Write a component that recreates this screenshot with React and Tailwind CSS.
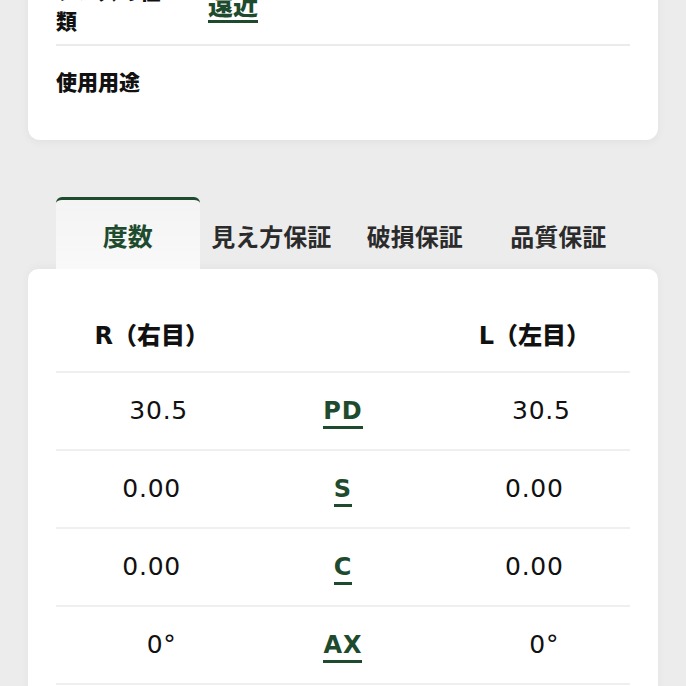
const rows = [
    { key: "PD", r: "30.5", l: "30.5", pad: "pl-[14px]" },
    { key: "S", r: "0.00", l: "0.00", pad: "" },
    { key: "C", r: "0.00", l: "0.00", pad: "" },
    { key: "AX", r: "0°", l: "0°", pad: "pl-[20px]" },
];

const tabs = ["度数", "見え方保証", "破損保証", "品質保証"];

export default function App() {
    return (
        <div className="h-[686px] overflow-hidden bg-[#ececec] font-['DejaVu_Sans','Noto_Sans_CJK_JP',sans-serif] text-[#111]">
            {/* 上部カード（レンズ情報） */}
            <div className="-mt-[40px] mx-[28px] bg-white rounded-b-[12px] px-[28px] shadow-[0_2px_10px_rgba(0,0,0,0.05)]">
                <div className="flex items-start pt-[15px] pb-[9px]">
                    <div className="w-[118px] text-[21px] leading-[30px] font-black font-['Noto_Sans_CJK_JP',sans-serif]">
                        レンズの種類
                    </div>
                    <div className="ml-[34px] mt-[16px]">
                        <span className="inline-block text-[25px] leading-[26px] font-black text-[#1e4a2e] border-b-[3px] border-[#1e4a2e] pb-[3px] font-['Noto_Sans_CJK_JP',sans-serif]">
                            遠近
                        </span>
                    </div>
                </div>
                <div className="h-[2px] bg-[#ebebeb]" />
                <div className="pt-[22px] pb-[46px] text-[21px] leading-[26px] font-black font-['Noto_Sans_CJK_JP',sans-serif]">
                    使用用途
                </div>
            </div>

            {/* タブ */}
            <div className="mt-[57px] mx-[56px] grid grid-cols-4 h-[72px]">
                {tabs.map((t, i) => (
                    <div
                        key={t}
                        className={
                            i === 0
                                ? "flex items-center justify-center pt-[2px] border-t-[3px] border-[#1e4a2e] rounded-t-[6px] bg-gradient-to-b from-[#f3f4f3] to-[#f8f9f8] text-[#1e4a2e] text-[25px] font-bold font-['Noto_Sans_CJK_JP',sans-serif]"
                                : "flex items-center justify-center pt-[2px] border-t-[3px] border-transparent text-[#2b2b2b] text-[24px] font-bold font-['Noto_Sans_CJK_JP',sans-serif]"
                        }
                    >
                        {t}
                    </div>
                ))}
            </div>

            {/* 度数テーブル */}
            <div className="mx-[28px] bg-white rounded-t-[10px] px-[28px] shadow-[0_-2px_10px_rgba(0,0,0,0.04)]">
                <div className="grid grid-cols-3 h-[102px] pt-[51px] text-[24px] leading-[32px] font-black">
                    <div className="text-center">R（右目）</div>
                    <div />
                    <div className="text-center">L（左目）</div>
                </div>
                {rows.map((row) => (
                    <div key={row.key}>
                        <div className="h-[2px] bg-[#efefef]" />
                        <div className="grid grid-cols-3 h-[76px] items-center">
                            <div className={`text-center text-[25px] leading-[30px] tracking-[0.03em] ${row.pad}`}>
                                {row.r}
                            </div>
                            <div className="text-center">
                                <span className="inline-block text-[24px] leading-[24px] font-bold tracking-[0.04em] text-[#1e4a2e] border-b-[3px] border-[#1e4a2e] pb-[3px] mt-[6px]">
                                    {row.key}
                                </span>
                            </div>
                            <div className={`text-center text-[25px] leading-[30px] tracking-[0.03em] ${row.pad}`}>
                                {row.l}
                            </div>
                        </div>
                    </div>
                ))}
                <div className="h-[2px] bg-[#efefef]" />
                <div className="h-[40px]" />
            </div>
        </div>
    );
}
